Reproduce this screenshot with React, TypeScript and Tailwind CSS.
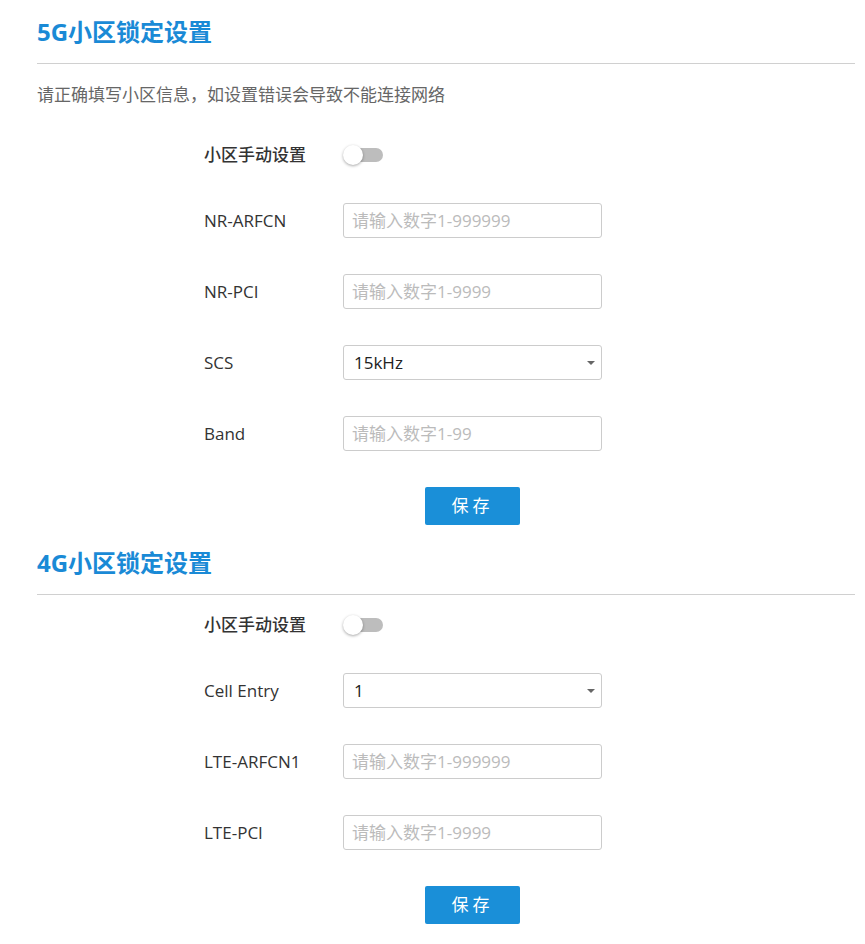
import React from 'react'

type Field =
  | { kind: 'toggle'; label: string }
  | { kind: 'input'; label: string; placeholder: string }
  | { kind: 'select'; label: string; value: string; options: string[] }

const Toggle: React.FC = () => (
  <div className="relative w-[40px] h-[24px] flex items-center">
    <div className="absolute left-[2px] right-0 h-[14px] rounded-full bg-[#bdbdbd]" />
    <div className="absolute left-0 w-[20px] h-[20px] rounded-full bg-white shadow-[0_1px_3px_rgba(0,0,0,0.35)]" />
  </div>
)

const Row: React.FC<{ field: Field }> = ({ field }) => {
  if (field.kind === 'toggle') {
    return (
      <div className="flex items-center h-[24px]">
        <div className="w-[139px] font-medium text-[17px] text-[#333]">{field.label}</div>
        <Toggle />
      </div>
    )
  }

  return (
    <div className="flex items-center h-[35px]">
      <div className="w-[139px] font-medium text-[17px] text-[#333]">{field.label}</div>
      {field.kind === 'input' ? (
        <input
          className="w-[259px] h-[35px] border border-[#cccccc] rounded-[3px] pl-[8px] text-[17px] text-[#333] placeholder:text-[#bbbbbb] outline-none"
          placeholder={field.placeholder}
        />
      ) : (
        <div className="relative w-[259px] h-[35px] border border-[#cccccc] rounded-[3px] flex items-center pl-[10px] text-[17px] text-[#222]">
          {field.value}
          <div className="absolute right-[6px] top-[15px] w-0 h-0 border-l-[4px] border-r-[4px] border-t-[4px] border-l-transparent border-r-transparent border-t-[#666]" />
        </div>
      )}
    </div>
  )
}

const Section: React.FC<{ title: string; note?: string; fields: Field[]; first?: boolean }> = ({
  title,
  note,
  fields,
  first,
}) => {
  return (
    <div className={first ? 'pt-[16px]' : 'pt-[22px]'}>
      <div className="text-[24px] leading-[32px] font-bold text-[#1a8ad6]">{title}</div>
      <div className="mt-[15px] h-px bg-[#d0d0d0] mr-[10px]" />
      {note && <div className="mt-[19px] text-[17px] leading-[24px] text-[#666]">{note}</div>}

      <div className={`pl-[167px] ${note ? 'mt-[36px]' : 'mt-[18px]'}`}>
        {fields.map((f, i) => (
          <div key={f.label} className={i === 0 ? '' : 'mt-[36px]'}>
            <Row field={f} />
          </div>
        ))}

        {/* button sits centred under the input column */}
        <div className="mt-[36px] pl-[139px] w-[398px] flex justify-center">
          <button className="w-[95px] h-[38px] rounded-[2px] bg-[#1a8fd8] text-white text-[17px] tracking-[4px]">
            保存
          </button>
        </div>
      </div>
    </div>
  )
}

export default function App() {
  return (
    <div className="w-[865px] h-[944px] bg-white pl-[37px] font-['Open_Sans','Noto_Sans_CJK_SC',sans-serif]">
      <Section
        first
        title="5G小区锁定设置"
        note="请正确填写小区信息，如设置错误会导致不能连接网络"
        fields={[
          { kind: 'toggle', label: '小区手动设置' },
          { kind: 'input', label: 'NR-ARFCN', placeholder: '请输入数字1-999999' },
          { kind: 'input', label: 'NR-PCI', placeholder: '请输入数字1-9999' },
          { kind: 'select', label: 'SCS', value: '15kHz', options: ['15kHz', '30kHz'] },
          { kind: 'input', label: 'Band', placeholder: '请输入数字1-99' },
        ]}
      />
      <Section
        title="4G小区锁定设置"
        fields={[
          { kind: 'toggle', label: '小区手动设置' },
          { kind: 'select', label: 'Cell Entry', value: '1', options: ['1', '2'] },
          { kind: 'input', label: 'LTE-ARFCN1', placeholder: '请输入数字1-999999' },
          { kind: 'input', label: 'LTE-PCI', placeholder: '请输入数字1-9999' },
        ]}
      />
    </div>
  )
}
